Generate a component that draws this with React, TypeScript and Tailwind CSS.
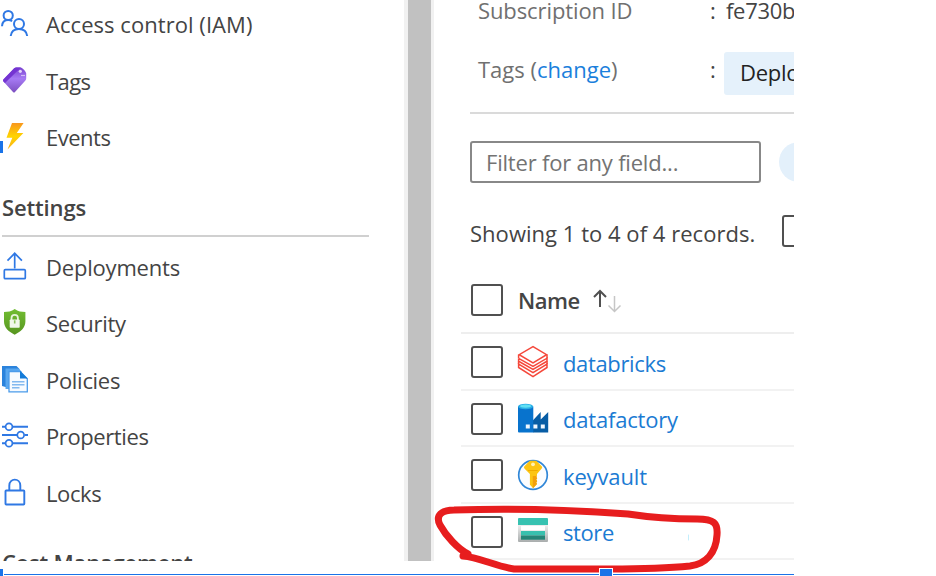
import React from "react";

type IconProps = { className?: string };

const stroke = { fill: "none", stroke: "#2f78e4", strokeWidth: 1.7 } as const;

function PeopleIcon() {
  return (
    <svg width="30" height="30" viewBox="0 0 30 30" {...stroke} strokeWidth={2}>
      <circle cx="8.2" cy="7.5" r="4.6" />
      <path d="M2 18.2c.2-3.600 2.200-6.100 6.200-6.100 1.600 0 2.900.4 3.900 1.200" />
      <circle cx="19" cy="16" r="5" />
      <path d="M10.700 28c.500-4.200 3.500-7 8.200-7s7.800 2.800 8.300 7" />
    </svg>
  );
}

function TagIcon() {
  return (
    <svg width="30" height="30" viewBox="0 0 30 30">
      <defs>
        <linearGradient id="tag" x1="0" y1="0" x2="0" y2="1">
          <stop offset="0" stopColor="#7a43d0" />
          <stop offset=".45" stopColor="#a67af4" />
          <stop offset="1" stopColor="#7c4fc0" />
        </linearGradient>
      </defs>
      <path d="M3.300 14.500 14.200 3.200q.8-.8 2-.8h4.600c1.400 0 5.400 4.300 5.400 5.900v5.200q0 1.200-.8 2L15 27q-1 1-2 0L3.400 16.500q-.8-1-.1-2z" fill="url(#tag)" />
      <path d="M3.300 14.500 14.200 3.200q.8-.8 2-.8h4.600L5 18.100l-1.600-1.700q-.8-1-.1-1.900z" fill="#7434d2" />
      <circle cx="20.300" cy="6.300" r="1.600" fill="#e5d6fb" />
      <path d="M21 10.500h4" stroke="#d3bdf5" strokeWidth="1.200" />
    </svg>
  );
}

function BoltIcon() {
  return (
    <svg width="30" height="30" viewBox="0 0 30 30">
      <defs>
        <linearGradient id="bolt" x1="0" y1="0" x2="0" y2="1">
          <stop offset="0" stopColor="#f9971e" />
          <stop offset=".5" stopColor="#ffd400" />
          <stop offset="1" stopColor="#f9b11c" />
        </linearGradient>
      </defs>
      <path d="M12 2h11.600l-6.800 10h6.600L7.500 28.500l4.800-11.800H6.500z" fill="url(#bolt)" />
    </svg>
  );
}

function DeployIcon() {
  return (
    <svg width="30" height="30" viewBox="0 0 30 30" {...stroke}>
      <path d="M14.700 17.500V2.500M7.500 9.700l7.200-7.400 7.200 7.400" />
      <rect x="4.300" y="18.700" width="21" height="9" rx="1" />
    </svg>
  );
}

function ShieldIcon() {
  return (
    <svg width="30" height="30" viewBox="0 0 30 30">
      <defs>
        <linearGradient id="shield" x1="0" y1="0" x2="0" y2="1">
          <stop offset="0" stopColor="#72bd32" />
          <stop offset="1" stopColor="#579520" />
        </linearGradient>
      </defs>
      <path d="M14.700 2C11.500 4.400 7.800 5 4 5v9.500c0 6.300 5 10.300 10.700 13.300C20.400 24.800 25.400 20.800 25.400 14.500V5c-3.800 0-7.500-.6-10.700-3z" fill="url(#shield)" />
      <path d="M11.500 14v-3c0-4.200 6.400-4.200 6.400 0v3" fill="none" stroke="#e6f3da" strokeWidth="1.800" />
      <rect x="9.700" y="12.500" width="10" height="8.300" rx=".8" fill="#f1f8eb" />
      <path d="M14.700 13.300v3.200" stroke="#8cc45c" strokeWidth="1.600" />
    </svg>
  );
}

function PoliciesIcon() {
  return (
    <svg width="30" height="30" viewBox="0 0 30 30">
      <path d="M2 2h14.500l3 3v18H5.500L2 22z" fill="#2b83dc" />
      <path d="M5.500 4.500h13L22 8v17H5.500z" fill="#58a7ef" />
      <path d="M9 7.500h11l7.300 7.300v13H9z" fill="#f7fbff" stroke="#4b9bea" strokeWidth="1.300" />
      <path d="M20 6.800v7.600h7.700z" fill="#137bd8" />
      <path d="M12 17.800h12.500M12 20.700h12.500M12 23.700h7.500" stroke="#83b9ef" strokeWidth="1.500" />
    </svg>
  );
}

function PropertiesIcon() {
  return (
    <svg width="30" height="30" viewBox="0 0 30 30" {...stroke}>
      <path d="M2 6.700h4M12.500 6.700H28M2 15h15M24.500 15H28M2 23.300h4M12.500 23.300H28" strokeWidth="2" />
      <circle cx="9" cy="6.700" r="3.400" />
      <circle cx="20.700" cy="15" r="3.400" />
      <circle cx="9" cy="23.300" r="3.400" />
    </svg>
  );
}

function LockIcon() {
  return (
    <svg width="30" height="30" viewBox="0 0 30 30" {...stroke} strokeWidth={1.9}>
      <path d="M9.300 13V8.500c0-7.800 11-7.800 11 0V13" />
      <rect x="5.500" y="13.500" width="18.800" height="14" rx=".7" />
    </svg>
  );
}

function DatabricksIcon() {
  return (
    <svg width="32" height="34" viewBox="0 0 32 34" fill="none" stroke="#f5483b" strokeWidth="1.500">
      <path d="M16 1.600 2.200 9.700 16 17.800l13.600-8.100z" />
      <path d="M1.600 13.500v2.700L16 24.500l14-8.300v-3L16 21.300 1.600 13.300M1.600 19v3.500L16 31.700l14-9.200V19L16 27.700z" />
      <path d="M1.600 9.700v3.600M30 9.700v3.600M1.600 16.200V19M30 16.200V19" />
    </svg>
  );
}

function FactoryIcon() {
  return (
    <svg width="32" height="34" viewBox="0 0 32 34">
      <path d="M16 18.200 23.700 10v7.500L31.200 10v20.500H16z" fill="#075da5" />
      <path d="M1 4.500h15.300v26H2q-1 0-1-1z" fill="#0873cd" />
      <ellipse cx="8.600" cy="4.500" rx="7.600" ry="2.800" fill="#2aaee6" />
      <ellipse cx="8.600" cy="4.100" rx="5.500" ry="1.600" fill="#61e0f3" />
      <path d="M8.800 22.500h4v4h-4zM16.400 22.500h4v4h-4zM23.800 22.500h4v4h-4z" fill="#eef7ff" />
    </svg>
  );
}

function KeyIcon() {
  return (
    <svg width="32" height="34" viewBox="0 0 32 34">
      <circle cx="16" cy="17" r="14.300" fill="#fbfdff" stroke="#3187d8" strokeWidth="1.700" />
      <path d="M12.800 2.800h6.400l5.500 5.500q1 1 0 2.300L20 16v1.800l-.8 1 1 1.200-1 1.500 1 1.600-1 1.500.8 1.300-3.800 4.400-3.300-3.500V16l-5.500-5.500q-1-1.200 0-2.300z" fill="#fcc514" />
      <path d="M15.800 18h4.200l-.8 1 1 1.200-1 1.500 1 1.600-1 1.500.8 1.300-4.200 4.200z" fill="#f3a00c" />
      <circle cx="16" cy="6.300" r="1.900" fill="#fff2b2" />
      <path d="M11 12.500h9.700" stroke="#f0ac00" strokeWidth="1" />
    </svg>
  );
}

function StorageIcon() {
  return (
    <svg width="32" height="34" viewBox="0 0 32 34">
      <defs>
        <linearGradient id="storage" x1="0" y1="0" x2="0" y2="1">
          <stop offset="0" stopColor="#eeeeee" />
          <stop offset="1" stopColor="#a9adad" />
        </linearGradient>
      </defs>
      <path d="M1 10h30v16q0 1-1 1H2q-1 0-1-1z" fill="url(#storage)" />
      <path d="M1 4q0-1 1-1h28q1 0 1 1v6H1z" fill="#37c2b1" />
      <path d="M4 11h24v4.500H4z" fill="#fff" />
      <path d="M4 16h24v4.500H4z" fill="#38c0ae" />
      <path d="M4 20.500h24v4.200H4z" fill="#258577" />
    </svg>
  );
}

function NavItem({ icon, label, track }: { icon: React.ReactNode; label: string; track: string }) {
  return (
    <div className="flex h-[56.5px] shrink-0 items-center gap-4">
      <span className="block size-[30px] shrink-0 -translate-y-px">{icon}</span>
      <span className={track}>{label}</span>
    </div>
  );
}

function Checkbox({ className = "" }: IconProps) {
  return <span className={`block size-8 shrink-0 rounded-[3px] border-2 border-[#505050] bg-white ${className}`} />;
}

function ResourceRow({ icon, label, track }: { icon: React.ReactNode; label: string; track: string }) {
  return (
    <div className="flex h-[56.5px] shrink-0 items-center border-b-2 border-[#f2f2f2] pt-[2px] pl-[10px]">
      <Checkbox />
      <span className="ml-[14px] block h-[34px] w-8">{icon}</span>
      <span className={`ml-[14px] pt-px text-[#1b7bd3] ${track}`}>{label}</span>
    </div>
  );
}

export default function App() {
  return (
    <div className="relative h-[576px] w-[936px] overflow-hidden bg-white font-['Open_Sans',sans-serif] text-[22px] leading-none whitespace-nowrap text-[#444]">
      <div className="flex h-[561px] w-[794px] overflow-hidden">
        <nav className="flex w-[404px] shrink-0 flex-col">
          <div className="-mt-1 flex shrink-0 flex-col">
            <NavItem icon={<PeopleIcon />} label="Access control (IAM)" track="tracking-[0.05px]" />
            <NavItem icon={<TagIcon />} label="Tags" track="tracking-[-0.6px]" />
            <NavItem icon={<BoltIcon />} label="Events" track="tracking-[-0.5px]" />
          </div>
          <h2 className="ml-[2px] flex h-[71px] w-[367px] shrink-0 items-center border-b-2 border-[#d0d0d0] pt-[14px] font-semibold tracking-[-0.15px]">Settings</h2>
          <div className="mt-[2px] flex shrink-0 flex-col">
            <NavItem icon={<DeployIcon />} label="Deployments" track="tracking-[-0.2px]" />
            <NavItem icon={<ShieldIcon />} label="Security" track="tracking-[-0.25px]" />
            <NavItem icon={<PoliciesIcon />} label="Policies" track="tracking-[-0.3px]" />
            <NavItem icon={<PropertiesIcon />} label="Properties" track="tracking-[-0.4px]" />
            <NavItem icon={<LockIcon />} label="Locks" track="tracking-[-0.4px]" />
          </div>
          <h2 className="mt-[30px] ml-[2px] shrink-0 font-semibold tracking-[-0.2px]">Cost Management</h2>
        </nav>

        <div className="w-[30px] shrink-0 border-r-[3px] border-l-4 border-[#f1f1f1] bg-[#c1c1c1]" />

        <main className="flex w-[360px] shrink-0 flex-col overflow-hidden">
          <div className="ml-9 flex shrink-0 flex-col border-b-2 border-[#dadada] pl-2">
            <div className="flex h-[22px] items-center pb-[3px]">
              <span className="w-[232px] shrink-0 tracking-[-0.1px] text-[#707070]">Subscription ID</span>
              <span className="w-4 shrink-0">:</span>
              <span className="tracking-[-0.3px]">fe730b</span>
            </div>
            <div className="mt-[30px] mb-[17px] flex h-[43px]">
              <span className="w-[232px] shrink-0 pt-[6px] tracking-[0px] text-[#707070]">
                Tags (<a className="text-[#1b7fdc]">change</a>)
              </span>
              <span className="w-[14px] shrink-0 pt-[6px]">:</span>
              <span className="flex w-[120px] shrink-0 items-center rounded-[3px] bg-[#e5f1fb] pb-[3px] pl-4 tracking-[-0.3px] text-[#222]">Deplo</span>
            </div>
          </div>
          <div className="mt-[27px] ml-9 flex h-[42px] shrink-0 items-center gap-[18px]">
            <div className="flex h-[42px] w-[291px] shrink-0 items-center rounded-[3px] border-2 border-[#888] pl-[14px] tracking-[-0.2px] text-[#737373]">Filter for any field...</div>
            <div className="h-10 w-24 shrink-0 rounded-full bg-[#e3f0fb]" />
          </div>
          <div className="mt-8 ml-9 flex h-8 shrink-0 items-center">
            <span className="w-[312px] shrink-0 pt-[3px] tracking-[0.03px]">Showing 1 to 4 of 4 records.</span>
            <Checkbox />
          </div>
          <div className="ml-[27px] flex shrink-0 flex-col">
            <div className="mt-[28px] flex h-[59px] shrink-0 items-center border-b-2 border-[#eee] pb-[8px] pl-[10px]">
              <Checkbox />
              <span className="ml-[15px] font-semibold tracking-[-0.5px]">Name</span>
              <svg className="ml-3 shrink-0" width="32" height="26" viewBox="0 0 32 26" fill="none" strokeWidth="2">
                <path d="M8 20V4M2 10l6-6 6 6" stroke="#505050" />
                <path d="M22.500 9v15M16.500 18.500l6 6 6-6" stroke="#c6c6c6" strokeWidth="1.500" />
              </svg>
            </div>
            <ResourceRow icon={<DatabricksIcon />} label="databricks" track="tracking-[-0.35px]" />
            <ResourceRow icon={<FactoryIcon />} label="datafactory" track="tracking-[-0.2px]" />
            <ResourceRow icon={<KeyIcon />} label="keyvault" track="tracking-[-0.15px]" />
            <ResourceRow icon={<StorageIcon />} label="store" track="tracking-[-0.4px]" />
          </div>
        </main>
      </div>

      {/* Hand-drawn marker around the storage account */}
      <svg className="absolute inset-0" width="936" height="576" viewBox="0 0 936 576" fill="none" stroke="#e71d1e" strokeWidth="7" strokeLinecap="round" strokeLinejoin="round">
        <path d="M468 554C458 549 446 536 440 525C435 515 442 510 454 510C510 508 575 510 628 514C654 518 678 519 697 519C714 519 718 523 717 535C716 553 706 564 690 566C670 568 650 569 610 569L514 569C498 567 478 557 463 556" />
        <path d="M688.500 535v5" stroke="#c3eefc" strokeWidth="1" />
      </svg>
      {/* Selection frame and its resize handles */}
      <div className="absolute top-[574px] left-1 h-px w-[790px] bg-[#1a73e8]" />
      <div className="absolute top-[141px] left-0 h-3 w-[3px] bg-[#1a73e8]" />
      <div className="absolute top-[569px] left-0 h-[7px] w-[3px] bg-[#1a73e8]" />
      <div className="absolute top-[568px] left-[599px] h-[14px] w-[14px] border border-white bg-[#1a73e8]" />
    </div>
  );
}
